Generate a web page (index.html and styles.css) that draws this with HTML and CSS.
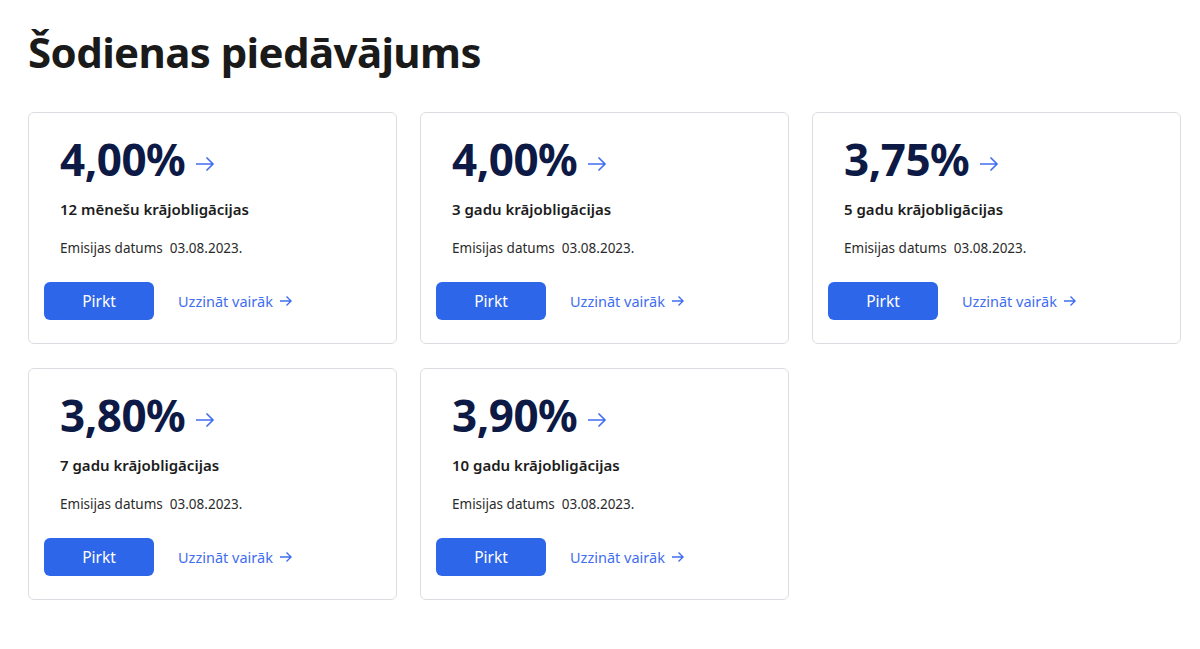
FILE: index.html
```html
<!DOCTYPE html>
<html lang="lv">
<head>
<meta charset="utf-8">
<title>Šodienas piedāvājums</title>
<link rel="stylesheet" href="styles.css">
</head>
<body>
<main class="page">
  <h1 class="title">Šodienas piedāvājums</h1>
  <div class="grid">
    <div class="card">
      <div class="info">
        <div class="rate">4,00% <svg class="rate-arrow" viewBox="0 0 20 16" width="20" height="16"><path d="M1 8h17M11.5 1.5L18 8l-6.5 6.5" fill="none" stroke="currentColor" stroke-width="1.6"/></svg></div>
        <div class="name">12 mēnešu krājobligācijas</div>
        <div class="date">Emisijas datums&nbsp; 03.08.2023.</div>
      </div>
      <div class="actions">
        <a class="btn" href="#">Pirkt</a>
        <a class="more" href="#">Uzzināt vairāk <svg class="more-arrow" viewBox="0 0 14 12" width="14" height="12"><path d="M1 6h11.5M7.5 1.5L12 6l-4.5 4.5" fill="none" stroke="currentColor" stroke-width="1.4"/></svg></a>
      </div>
    </div>
    <div class="card">
      <div class="info">
        <div class="rate">4,00% <svg class="rate-arrow" viewBox="0 0 20 16" width="20" height="16"><path d="M1 8h17M11.5 1.5L18 8l-6.5 6.5" fill="none" stroke="currentColor" stroke-width="1.6"/></svg></div>
        <div class="name">3 gadu krājobligācijas</div>
        <div class="date">Emisijas datums&nbsp; 03.08.2023.</div>
      </div>
      <div class="actions">
        <a class="btn" href="#">Pirkt</a>
        <a class="more" href="#">Uzzināt vairāk <svg class="more-arrow" viewBox="0 0 14 12" width="14" height="12"><path d="M1 6h11.5M7.5 1.5L12 6l-4.5 4.5" fill="none" stroke="currentColor" stroke-width="1.4"/></svg></a>
      </div>
    </div>
    <div class="card">
      <div class="info">
        <div class="rate">3,75% <svg class="rate-arrow" viewBox="0 0 20 16" width="20" height="16"><path d="M1 8h17M11.5 1.5L18 8l-6.5 6.5" fill="none" stroke="currentColor" stroke-width="1.6"/></svg></div>
        <div class="name">5 gadu krājobligācijas</div>
        <div class="date">Emisijas datums&nbsp; 03.08.2023.</div>
      </div>
      <div class="actions">
        <a class="btn" href="#">Pirkt</a>
        <a class="more" href="#">Uzzināt vairāk <svg class="more-arrow" viewBox="0 0 14 12" width="14" height="12"><path d="M1 6h11.5M7.5 1.5L12 6l-4.5 4.5" fill="none" stroke="currentColor" stroke-width="1.4"/></svg></a>
      </div>
    </div>
    <div class="card">
      <div class="info">
        <div class="rate">3,80% <svg class="rate-arrow" viewBox="0 0 20 16" width="20" height="16"><path d="M1 8h17M11.5 1.5L18 8l-6.5 6.5" fill="none" stroke="currentColor" stroke-width="1.6"/></svg></div>
        <div class="name">7 gadu krājobligācijas</div>
        <div class="date">Emisijas datums&nbsp; 03.08.2023.</div>
      </div>
      <div class="actions">
        <a class="btn" href="#">Pirkt</a>
        <a class="more" href="#">Uzzināt vairāk <svg class="more-arrow" viewBox="0 0 14 12" width="14" height="12"><path d="M1 6h11.5M7.5 1.5L12 6l-4.5 4.5" fill="none" stroke="currentColor" stroke-width="1.4"/></svg></a>
      </div>
    </div>
    <div class="card">
      <div class="info">
        <div class="rate">3,90% <svg class="rate-arrow" viewBox="0 0 20 16" width="20" height="16"><path d="M1 8h17M11.5 1.5L18 8l-6.5 6.5" fill="none" stroke="currentColor" stroke-width="1.6"/></svg></div>
        <div class="name">10 gadu krājobligācijas</div>
        <div class="date">Emisijas datums&nbsp; 03.08.2023.</div>
      </div>
      <div class="actions">
        <a class="btn" href="#">Pirkt</a>
        <a class="more" href="#">Uzzināt vairāk <svg class="more-arrow" viewBox="0 0 14 12" width="14" height="12"><path d="M1 6h11.5M7.5 1.5L12 6l-4.5 4.5" fill="none" stroke="currentColor" stroke-width="1.4"/></svg></a>
      </div>
    </div>
  </div>
</main>
</body>
</html>
```
FILE: styles.css
```css
* { box-sizing: border-box; }
html, body { margin: 0; padding: 0; background: #fff; }
body {
  font-family: "Noto Sans", "Open Sans", sans-serif;
  color: #1c1c1c;
}
.page { padding: 28px 20px 0 28px; }
.title {
  margin: 0;
  font-size: 42px;
  line-height: 48px;
  font-weight: 700;
  color: #1a1a1a;
  letter-spacing: -0.6px;
}
.grid {
  margin-top: 36px;
  display: grid;
  grid-template-columns: repeat(3, 369px);
  column-gap: 23px;
  row-gap: 24px;
}
.card {
  height: 232px;
  border: 1px solid #dcdde3;
  border-radius: 6px;
  padding: 20px 15px 0 15px;
  display: flex;
  flex-direction: column;
}
.info { padding-left: 16px; }
.rate {
  display: flex;
  align-items: center;
  gap: 10px;
  font-size: 44px;
  line-height: 52px;
  font-weight: 700;
  color: #0d1a45;
  letter-spacing: -0.5px;
}
.rate-arrow { color: #3f6ef0; margin-top: 10px; }
.name {
  margin-top: 13px;
  font-size: 15px;
  line-height: 22px;
  font-weight: 600;
  color: #1c1c1c;
}
.date {
  margin-top: 18px;
  font-size: 13.5px;
  line-height: 20px;
  color: #2a2a2a;
}
.actions {
  margin-top: 24px;
  display: flex;
  align-items: center;
  gap: 24px;
}
.btn {
  width: 110px;
  height: 38px;
  border-radius: 6px;
  background: #2d66e9;
  color: #fff;
  text-decoration: none;
  font-size: 15.5px;
  display: flex;
  align-items: center;
  justify-content: center;
}
.more {
  color: #3f6ef0;
  text-decoration: none;
  font-size: 14.5px;
  display: flex;
  align-items: center;
  gap: 6px;
}
.more-arrow { color: #3f6ef0; }
```
